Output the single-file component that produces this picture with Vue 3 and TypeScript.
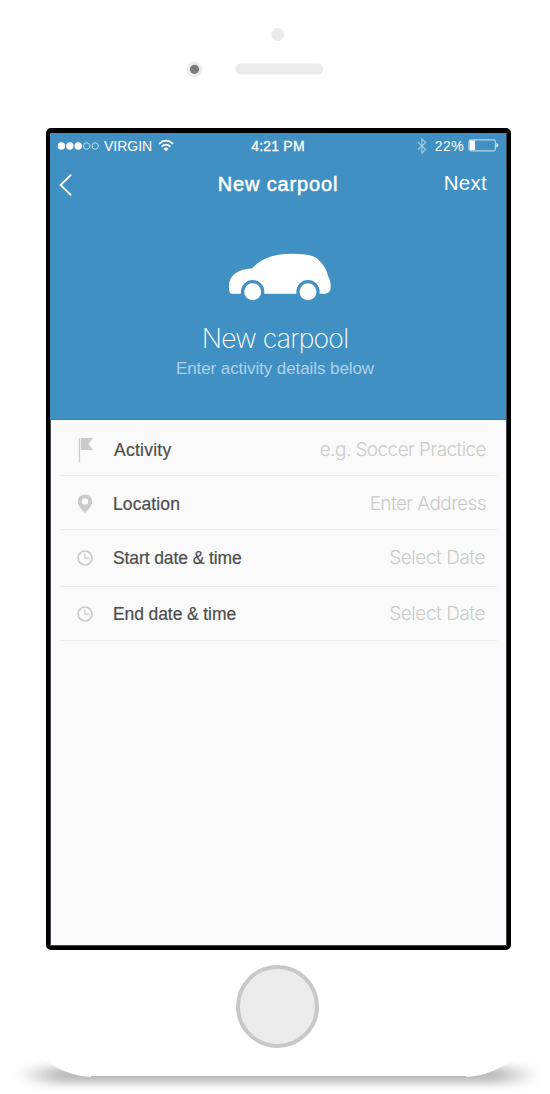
<script setup lang="ts">
interface Field {
  id: string
  icon: 'flag' | 'pin' | 'clock'
  label: string
  hint: string
}

const fields: Field[] = [
  { id: 'activity', icon: 'flag', label: 'Activity', hint: 'e.g. Soccer Practice' },
  { id: 'location', icon: 'pin', label: 'Location', hint: 'Enter Address' },
  { id: 'start', icon: 'clock', label: 'Start date & time', hint: 'Select Date' },
  { id: 'end', icon: 'clock', label: 'End date & time', hint: 'Select Date' },
]
</script>

<template>
  <div class="stage">
    <div class="shadow"></div>
    <div class="phone">
      <header class="sensors">
        <svg width="170" height="75" viewBox="170 15 170 75">
          <circle cx="277.9" cy="34.5" r="6.5" fill="#ebebeb" />
          <circle cx="194.5" cy="69.3" r="7.8" fill="#ececec" />
          <circle cx="194.5" cy="69.3" r="4.6" fill="#7c7c7c" />
          <rect x="235.3" y="63.5" width="88" height="11" rx="5.5" fill="#ebebeb" />
        </svg>
      </header>

      <main class="screen">
        <section class="hero">
          <div class="status">
            <div class="carrier">
              <svg width="43" height="10" viewBox="0 0 43 10">
                <g fill="#fff">
                  <circle cx="4.4" cy="5" r="3.7" />
                  <circle cx="12.8" cy="5" r="3.7" />
                  <circle cx="21.2" cy="5" r="3.7" />
                </g>
                <g fill="none" stroke="#c3ddee" stroke-width="1">
                  <circle cx="29.7" cy="5" r="3.2" />
                  <circle cx="38.2" cy="5" r="3.2" />
                </g>
              </svg>
              <span class="carrier-name">VIRGIN</span>
              <svg class="wifi" width="16" height="13" viewBox="0 0 16 13" fill="none" stroke="#fff" stroke-width="1.7">
                <path d="M1 4.8Q8-1.4 15 4.8" />
                <path d="M3.6 7.6Q8 3.7 12.4 7.6" />
                <path d="M5.4 9.6Q8 7.3 10.6 9.6L8 12.2Z" fill="#fff" stroke="none" />
              </svg>
            </div>
            <span class="time">4:21 PM</span>
            <div class="power">
              <svg width="10" height="16" viewBox="0 0 10 16" fill="none" stroke="#a9cde5" stroke-width="1.1">
                <path d="M.8 4.2L8.7 11.6L4.9 15V1L8.7 4.4L.8 11.8" />
              </svg>
              <span class="percent">22%</span>
              <svg class="battery" width="31" height="13" viewBox="0 0 31 13">
                <rect x="1" y=".8" width="26.4" height="11" rx="1.8" fill="none" stroke="#b5d5e9" stroke-width="1.2" />
                <rect x="1.7" y="1.5" width="5.4" height="9.6" rx=".8" fill="#fff" />
                <path d="M28.4 4.1Q30.4 4.7 30.4 6.3T28.4 8.5Z" fill="#e3f0f8" />
              </svg>
            </div>
          </div>

          <nav class="nav">
            <svg class="back" width="14" height="24" viewBox="0 0 14 24" fill="none" stroke="#fff" stroke-width="1.9">
              <path d="M12.2 1.6L1.6 12L12.2 22.4" />
            </svg>
            <h1 class="title">New carpool</h1>
            <span class="next">Next</span>
          </nav>

          <svg class="car" width="140" height="70" viewBox="0 0 420 210">
            <path
              fill="#fff"
              d="M64 161Q57 160 57 140C57 108 80 88 127 85C150 56 195 41 245 41C280 41 302 45 319 53C336 68 350 85 354 108C361 120 364 136 361 150Q356 161 345 161H327A33 33 0 1 0 261 161H165Q161 163 161 155A33 33 0 1 0 95 161Z"
            />
            <circle cx="128" cy="155" r="35" fill="#4190c4" />
            <circle cx="294" cy="155" r="35" fill="#4190c4" />
            <circle cx="128" cy="155" r="25.5" fill="#fff" />
            <circle cx="294" cy="155" r="25.5" fill="#fff" />
          </svg>
          <h2 class="heading">New carpool</h2>
          <p class="sub">Enter activity details below</p>
        </section>

        <ul class="fields">
          <li v-for="field in fields" :key="field.id" class="field" :class="field.id">
            <span class="icon">
              <svg v-if="field.icon === 'flag'" width="16" height="26" viewBox="0 0 16 26" fill="#cbcbcb">
                <rect x=".8" y="1" width="1.3" height="24.2" />
                <path d="M2.8 1H15.2L10.4 7L15.2 13H2.8Z" />
              </svg>
              <svg v-else-if="field.icon === 'pin'" width="16" height="20" viewBox="0 0 16 20">
                <path
                  fill="#cbcbcb"
                  fill-rule="evenodd"
                  d="M8 .6C3.9.6.8 3.6.8 7.5C.8 11.4 3.9 15.2 8 19C12.1 15.2 15.2 11.4 15.2 7.5C15.2 3.6 12.1.6 8 .6ZM8 4.3A3.2 3.2 0 1 1 8 10.7A3.2 3.2 0 0 1 8 4.3Z"
                />
              </svg>
              <svg v-else width="16" height="16" viewBox="0 0 16 16" fill="none" stroke="#cbcbcb">
                <circle cx="8" cy="8" r="7" stroke-width="1.7" />
                <path d="M7.9 3.6V8.2H12.2" stroke-width="1.3" />
              </svg>
            </span>
            <span class="label">{{ field.label }}</span>
            <span class="hint">{{ field.hint }}</span>
          </li>
        </ul>
      </main>

      <div class="home"></div>
      <div class="rim"></div>
    </div>
  </div>
</template>

<style>
body {
  background: #fff;
}
</style>

<style scoped>
* {
  box-sizing: border-box;
}
.stage {
  position: relative;
  width: 550px;
  height: 1094px;
  overflow: hidden;
  background: #fff;
  font-family: "Liberation Sans", Arial, sans-serif;
}
.shadow {
  position: absolute;
  left: 14px;
  top: 1067px;
  width: 528px;
  height: 16px;
  border-radius: 50px / 8px;
  background: linear-gradient(90deg, transparent, #b8b8b8 48px, #b8b8b8 480px, transparent);
  filter: blur(5px);
}
.phone {
  position: relative;
  display: flex;
  flex-direction: column;
  align-items: center;
  width: 525px;
  height: 1077px;
  margin-left: 16px;
  border-radius: 0 0 78px 78px;
  background: #fff;
}
.sensors {
  height: 128px;
  width: 525px;
  padding: 15px 0 0 154px;
}
.screen {
  flex: none;
  width: 465px;
  height: 822px;
  border: 4px solid #000;
  border-top-width: 5px;
  border-radius: 5px;
  background: #fafafa;
  box-shadow: inset 0 0 0 1px #41464c;
}
.hero {
  height: 287px;
  margin: 0 1px 0 0;
  display: flex;
  flex-direction: column;
  align-items: center;
  color: #fff;
  background: #4190c4;
  border-bottom: 1px solid #2e80b8;
}
.status {
  width: 456px;
  height: 25px;
  display: grid;
  grid-template-columns: 1fr auto 1fr;
  align-items: center;
  padding: 0 7px 0 7px;
  font-size: 14px;
  line-height: 16px;
}
.carrier,
.power {
  display: flex;
  align-items: center;
}
.power {
  justify-content: flex-end;
}
.carrier-name {
  margin: 0 6px 0 4px;
}
.wifi {
  margin-top: -1px;
}
.time {
  -webkit-text-stroke: 0.3px #fff;
  letter-spacing: 0.2px;
}
.percent {
  margin: 0 4px 0 8px;
  letter-spacing: 0.4px;
}
.nav {
  width: 456px;
  height: 52px;
  display: grid;
  grid-template-columns: 1fr auto 1fr;
  align-items: center;
  padding: 0 19px 0 9px;
}
.back {
  margin-top: 2px;
}
.title {
  margin: 0 0 0 10px;
  font-size: 20px;
  font-weight: 400;
  letter-spacing: 0.85px;
  -webkit-text-stroke: 0.5px #fff;
}
.next {
  justify-self: end;
  font-size: 20.5px;
  letter-spacing: 0.3px;
  margin-top: -3px;
}
.car {
  margin: 30px 0 0 4px;
}
.heading {
  margin: 9px 6px 0 0;
  font: 200 26.5px/38px Inter, sans-serif;
  letter-spacing: -0.75px;
  white-space: nowrap;
}
.sub {
  margin: 1px 6px 0 0;
  font-size: 17px;
  line-height: 22px;
  letter-spacing: -0.08px;
  color: #b0d1e8;
}
.fields {
  list-style: none;
  margin: 0;
  padding: 0 10px;
}
.field {
  display: flex;
  align-items: center;
  height: 56px;
  padding: 4px 10px 0 17px;
  border-bottom: 1px solid #ebebeb;
}
.location {
  height: 54px;
  padding-top: 2px;
}
.start {
  height: 57px;
  padding-top: 0;
}
.end {
  height: 54px;
  padding-top: 0;
}
.icon {
  display: flex;
  width: 36px;
}
.activity .icon {
  padding-left: 1px;
}
.label {
  flex: 1;
  font-size: 17.5px;
  letter-spacing: -0.1px;
  color: #4d4d4d;
  -webkit-text-stroke: 0.2px #4d4d4d;
}
.activity .label {
  padding: 2px 0 0 1px;
  letter-spacing: 0.25px;
}
.location .label {
  padding-top: 1px;
  letter-spacing: 0.1px;
}
.end .label {
  padding-top: 1px;
}
.hint {
  margin-right: 1px;
  font: 300 19px/26px Inter, sans-serif;
  letter-spacing: -0.58px;
  color: #cbcbcb;
  white-space: nowrap;
}
.start .hint,
.end .hint {
  margin-right: 2px;
  letter-spacing: -0.45px;
}
.home {
  flex: none;
  width: 83px;
  height: 83px;
  margin: 15px 2px 0 0;
  border: 4px solid #c8c8c8;
  border-radius: 50%;
  background: #ebebeb;
}
.rim {
  width: 375px;
  height: 1px;
  margin: auto 0 0;
  background: #b8b8b8;
}
</style>
